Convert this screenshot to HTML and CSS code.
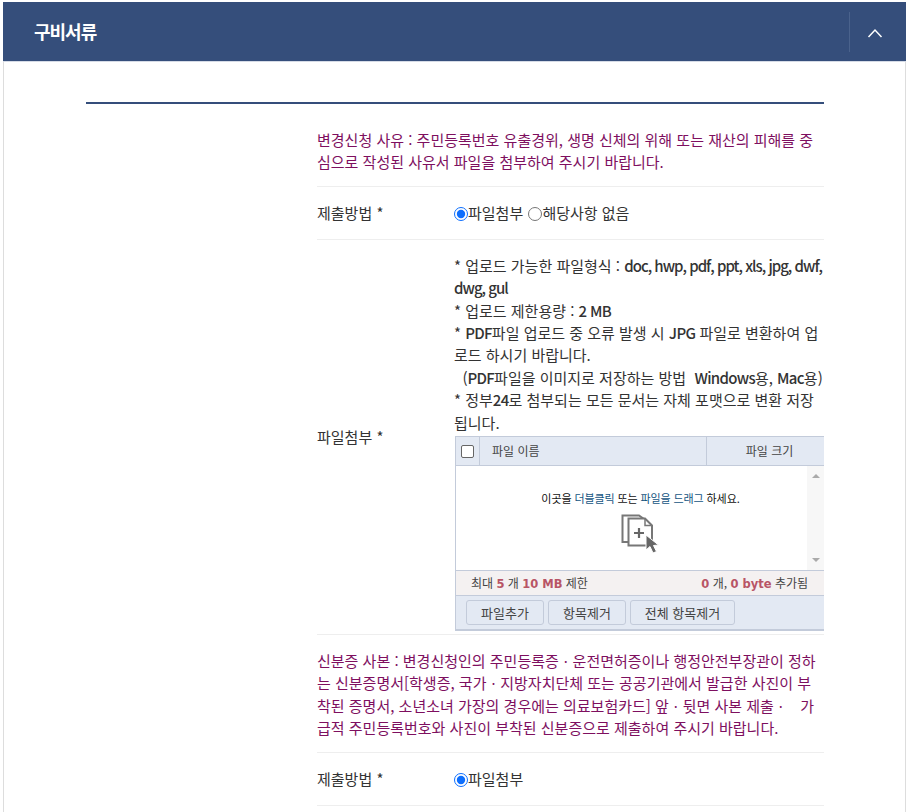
FILE: index.html
```html
<!DOCTYPE html>
<html lang="ko">
  <head>
    <meta charset="UTF-8" />
    <meta name="viewport" content="width=device-width, initial-scale=1.0" />
    <title>구비서류</title>
    <link rel="stylesheet" href="styles.css">
  </head>
  <body>
    <div class="panel">
      <!-- Panel header -->
      <div class="panel-head">
        <h2 class="panel-title">구비서류</h2>
        <button class="panel-toggle" type="button" aria-label="접기">
          <svg width="16" height="10" viewBox="0 0 16 10"><path d="M1.5 9L8 2l6.500 7" fill="none" stroke="#fff" stroke-width="1.500"/></svg>
        </button>
      </div>

      <div class="panel-body">
        <div class="docs">
          <p class="notice">변경신청 사유 : 주민등록번호 유출경위, 생명 신체의 위해 또는 재산의 피해를 중심으로 작성된 사유서 파일을 첨부하여 주시기 바랍니다.</p>

          <div class="row row-method">
            <div class="row-label">제출방법 *</div>
            <div class="row-value">
              <label class="radio"><input type="radio" name="method1" checked />파일첨부</label>
              <label class="radio"><input type="radio" name="method1" />해당사항 없음</label>
            </div>
          </div>

          <div class="row">
            <div class="row-label">파일첨부 *</div>
            <div class="row-value row-value-file">
              <div class="file-help">
                * 업로드 가능한 파일형식 : <b class="file-types">doc, hwp, pdf, ppt, xls, jpg, dwf, dwg, gul</b><br />
                * 업로드 제한용량 : <b>2 MB</b><br />
                * <b>PDF</b>파일 업로드 중 오류 발생 시 <b>JPG</b> 파일로 변환하여 업로드 하시기 바랍니다.<br />
                &nbsp;&nbsp;(<b>PDF</b>파일을 이미지로 저장하는 방법 &nbsp;<b>Windows</b>용, <b>Mac</b>용)<br />
                * 정부<b>24</b>로 첨부되는 모든 문서는 자체 포맷으로 변환 저장됩니다.
              </div>

              <!-- Upload widget -->
              <div class="uploader">
                <div class="up-head">
                  <div class="up-check"><span class="checkbox"></span></div>
                  <div class="up-name">파일 이름</div>
                  <div class="up-size">파일 크기</div>
                </div>
                <div class="up-list">
                  <div class="up-drop">
                    <p class="up-hint">이곳을 <span>더블클릭</span> 또는 <span>파일을 드래그</span> 하세요.</p>
                    <svg class="up-icon" width="42" height="44" viewBox="0 0 42 44">
                      <path d="M9 30H3.500V3.500H20L25 7" fill="none" stroke="#777" stroke-width="2"/>
                      <path d="M9.500 6.500H26L33 13.500V33.500H9.500Z" fill="#fff" stroke="#777" stroke-width="2"/>
                      <path d="M26 6.500V13.500H33" fill="none" stroke="#777" stroke-width="1.500"/>
                      <path d="M15 21H25M20 16V26" fill="none" stroke="#666" stroke-width="2.200"/>
                      <path d="M27 23V38L31 34.500L34 41L37.500 39.500L34.500 33.500L39.500 33Z" fill="#666" stroke="#fff" stroke-width="1"/>
                    </svg>
                  </div>
                  <div class="up-scroll">
                    <span class="arrow-up"></span>
                    <span class="arrow-down"></span>
                  </div>
                </div>
                <div class="up-status">
                  <div>최대 <b>5</b> 개 <b>10 MB</b> 제한</div>
                  <div><b>0</b> 개, <b>0 byte</b> 추가됨</div>
                </div>
                <div class="up-actions">
                  <button class="up-btn" type="button">파일추가</button>
                  <button class="up-btn" type="button">항목제거</button>
                  <button class="up-btn up-btn-wide" type="button">전체 항목제거</button>
                </div>
              </div>
            </div>
          </div>

          <p class="notice notice-next">신분증 사본 : 변경신청인의 주민등록증ㆍ운전면허증이나 행정안전부장관이 정하는 신분증명서[학생증, 국가ㆍ지방자치단체 또는 공공기관에서 발급한 사진이 부착된 증명서, 소년소녀 가장의 경우에는 의료보험카드] 앞ㆍ뒷면 사본 제출ㆍ&nbsp;&nbsp; 가급적 주민등록번호와 사진이 부착된 신분증으로 제출하여 주시기 바랍니다.</p>

          <div class="row row-method">
            <div class="row-label">제출방법 *</div>
            <div class="row-value">
              <label class="radio"><input type="radio" name="method2" checked />파일첨부</label>
            </div>
          </div>
        </div>
      </div>
    </div>
  </body>
</html>
```

FILE: styles.css
```css
html,
body {
  height: 100%;
}

body {
  font-family: "Noto Sans CJK KR", "Noto Sans", sans-serif;
  font-size: 15px;
  line-height: 22.4px;
  color: #333;
  margin: 0;
  padding: 2px 5px 0 4px;
  background-color: #fff;
  overflow: hidden;
}

.panel {
  border-left: 1px solid #ddd;
  border-right: 1px solid #ddd;
  height: 100%;
  margin-left: -1px;
}

.panel-head {
  display: flex;
  align-items: center;
  justify-content: space-between;
  height: 59px;
  margin: 0 -1px;
  background-color: #354e7b;
  border-bottom: 1px solid #d5dbe6;
}

.panel-title {
  margin: 0 0 0 31px;
  color: #fff;
  font-size: 18px;
  font-weight: bold;
  letter-spacing: -1px;
}

.panel-toggle {
  width: 57px;
  height: 40px;
  padding: 2px 7px 0 0;
  background: none;
  border: none;
  border-left: 1px solid #4a628c;
  display: flex;
  align-items: center;
  justify-content: center;
}

.panel-body {
  padding: 40px 81px 0 82px;
}

.docs {
  width: 738px;
  box-sizing: border-box;
  padding-left: 231px;
  border-top: 2px solid #354e7b;
}

.notice {
  margin: 0;
  padding: 25px 0 12px 0;
  color: #7e0f5f;
  border-bottom: 1px solid #eee;
}

.notice-next {
  padding-top: 15px;
}

.row {
  display: flex;
  align-items: center;
  border-bottom: 1px solid #eee;
}

.row-method {
  box-sizing: border-box;
  height: 53px;
  padding-top: 1px;
}

.row-label {
  width: 137px;
  flex-shrink: 0;
}

.row-value {
  width: 370px;
  overflow: hidden;
}

.row-value-file {
  padding: 15px 0 3px 0;
}

.radio {
  margin-right: 1px;
}

.radio input {
  width: 14px;
  height: 14px;
  margin: 0;
  vertical-align: -2px;
  accent-color: #0d6efd;
}

.file-help {
  margin-bottom: 2px;
}

.file-help b {
  font-weight: 500;
  letter-spacing: -0.7px;
}

.file-help .file-types {
  letter-spacing: -1px;
}

.uploader {
  width: 420px;
  margin-left: 1px;
  font-size: 12px;
  line-height: 16px;
  color: #444;
  border: 1px solid #c3cbda;
  border-right: none;
  box-sizing: border-box;
}

.up-head {
  display: flex;
  height: 28px;
  background-color: #e3e9f3;
  border-bottom: 1px solid #c3cbda;
}

.up-check {
  width: 23px;
  display: flex;
  align-items: center;
  justify-content: center;
  border-right: 1px solid #c3cbda;
}

.checkbox {
  width: 11px;
  height: 11px;
  background: #fff;
  border: 1px solid #666;
  border-radius: 2px;
}

.up-name {
  width: 227px;
  padding-left: 12px;
  box-sizing: border-box;
  line-height: 28px;
  border-right: 1px solid #c3cbda;
}

.up-size {
  width: 125px;
  text-align: center;
  line-height: 28px;
  flex-shrink: 0;
}

.up-list {
  display: flex;
  width: 368px;
  height: 104px;
  background: #fff;
}

.up-drop {
  flex-grow: 1;
  text-align: center;
  padding: 24px 0 0 18px;
}

.up-hint {
  margin: 0;
  color: #111;
  font-size: 11px;
  letter-spacing: -0.1px;
}

.up-hint span {
  color: #14557f;
}

.up-icon {
  display: block;
  margin: 6px auto 0 auto;
  transform: translateX(-1px);
}

.up-scroll {
  width: 17px;
  background-color: #f7f7f7;
  display: flex;
  flex-direction: column;
  justify-content: space-between;
  align-items: center;
  padding: 8px 0;
  box-sizing: border-box;
}

.arrow-up {
  border: 4px solid transparent;
  border-top: none;
  border-bottom: 4px solid #aaa;
}

.arrow-down {
  border: 4px solid transparent;
  border-bottom: none;
  border-top: 4px solid #aaa;
}

.up-status {
  display: flex;
  justify-content: space-between;
  width: 368px;
  height: 26px;
  box-sizing: border-box;
  padding: 4px 16px 4px 15px;
  background-color: #f4f1f1;
  border-top: 1px solid #c3cbda;
  border-bottom: 1px solid #c3cbda;
}

.up-status b {
  font-family: "DejaVu Sans", sans-serif;
  font-size: 11.500px;
  color: #b85566;
}

.up-actions {
  display: flex;
  gap: 4px;
  height: 34px;
  box-sizing: border-box;
  padding: 4px 10px;
  background-color: #e3e9f3;
  border-bottom: 1px solid #c3cbda;
}

.up-btn {
  width: 78px;
  padding: 0;
  height: 25px;
  font-family: inherit;
  font-size: 13px;
  color: #444;
  background-color: #e3e9f3;
  border: 1px solid #c3cbda;
  border-radius: 3px;
}

.up-btn-wide {
  width: 105px;
}
```
